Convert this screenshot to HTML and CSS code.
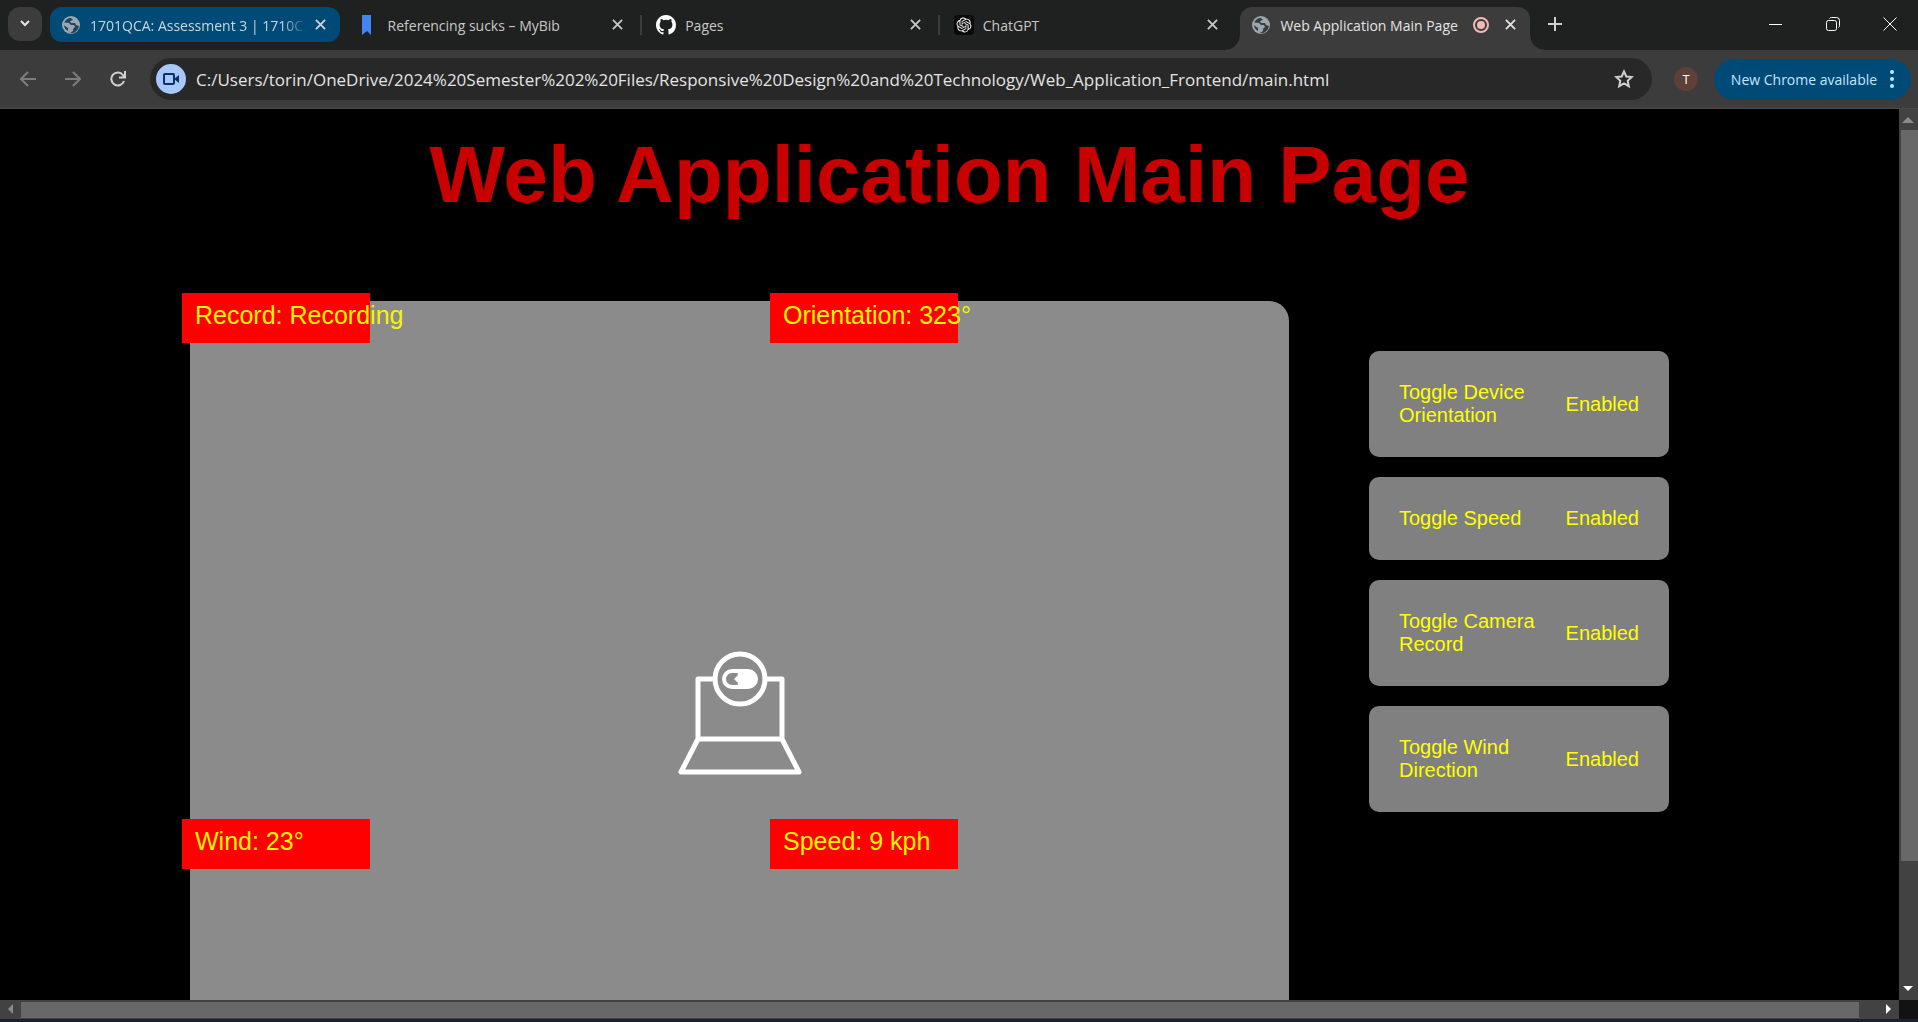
FILE: index.html
```html
<!DOCTYPE html>
<html lang="en">
<head>
<meta charset="utf-8">
<title>Web Application Main Page</title>
<link rel="stylesheet" href="styles.css">
</head>
<body>
<svg class="defs" aria-hidden="true">
  <symbol id="close" viewBox="0 0 12 12"><path d="M1 1l10 10M11 1L1 11" fill="none" stroke="currentColor" stroke-width="2"/></symbol>
  <symbol id="globe" viewBox="0 0 20 20"><circle cx="10" cy="10" r="9" fill="#9aa6b2"/><path d="M10 3C7 3 4 5 3.500 7.500L8 8l2 2h3l1 2-2 2v2l-3 2c4 1 8-2 9-7l-3-1-1-2h-4l-1-2 3-1zM3 10c0 3 2 5 4 6v-3l-3-2z" fill="currentColor"/></symbol>
</svg>
<header class="tab-strip">
  <button class="tab-search" aria-label="Search tabs"><svg width="12" height="8" viewBox="0 0 12 8"><path d="M2 1l4 4 4-4" fill="none" stroke="#e8e8e8" stroke-width="2"/></svg></button>
  <nav class="tabs" aria-label="Tabs">
    <div class="tab tab-shared"><svg class="favicon"><use href="#globe"/></svg><a class="tab-title fade" href="#">1701QCA: Assessment 3 | 1710C</a><button class="tab-close" aria-label="Close tab"><svg width="11" height="11"><use href="#close"/></svg></button></div>
    <div class="tab"><svg class="favicon" viewBox="0 0 20 20"><path d="M3 0h9v20l-4-4-5 4z" fill="#4285f4"/></svg><a class="tab-title" href="#">Referencing sucks – MyBib</a><button class="tab-close" aria-label="Close tab"><svg width="11" height="11"><use href="#close"/></svg></button></div>
    <div class="tab divided"><svg class="favicon" viewBox="0 0 16 16"><path fill="#fff" d="M8 0C3.580 0 0 3.580 0 8c0 3.540 2.290 6.530 5.470 7.590.4.070.55-.17.55-.38 0-.19-.01-.82-.01-1.490-2.010.37-2.530-.49-2.690-.94-.09-.23-.48-.94-.82-1.130-.28-.15-.68-.52-.01-.53.63-.01 1.080.58 1.230.82.72 1.210 1.870.87 2.330.66.07-.52.28-.87.51-1.070-1.780-.2-3.640-.89-3.640-3.950 0-.87.31-1.590.82-2.150-.08-.2-.36-1.020.08-2.120 0 0 .67-.21 2.200.82a7.400 7.400 0 0 1 4 0c1.530-1.040 2.200-.82 2.200-.82.44 1.100.16 1.920.08 2.120.51.56.82 1.270.82 2.150 0 3.070-1.870 3.750-3.650 3.950.29.25.54.73.54 1.480 0 1.070-.01 1.930-.01 2.200 0 .21.15.46.55.38A8 8 0 0 0 16 8c0-4.420-3.580-8-8-8z"/></svg><a class="tab-title" href="#">Pages</a><button class="tab-close" aria-label="Close tab"><svg width="11" height="11"><use href="#close"/></svg></button></div>
    <div class="tab divided"><svg class="favicon" viewBox="-4 -4 32 32"><rect x="-4" y="-4" width="32" height="32" rx="6" fill="#090909"/><path fill="#fff" d="M22.2819 9.8211a5.9847 5.9847 0 0 0-.5157-4.9108 6.0462 6.0462 0 0 0-6.5098-2.9A6.0651 6.0651 0 0 0 4.9807 4.1818a5.9847 5.9847 0 0 0-3.9977 2.9 6.0462 6.0462 0 0 0 .7427 7.0966 5.98 5.98 0 0 0 .511 4.9107 6.051 6.051 0 0 0 6.5146 2.9001A5.9847 5.9847 0 0 0 13.2599 24a6.0557 6.0557 0 0 0 5.7718-4.2058 5.9894 5.9894 0 0 0 3.9977-2.9001 6.0557 6.0557 0 0 0-.7475-7.0729zm-9.022 12.6081a4.4755 4.4755 0 0 1-2.8764-1.0408l.1419-.0804 4.7783-2.7582a.7948.7948 0 0 0 .3927-.6813v-6.7369l2.02 1.1686a.071.071 0 0 1 .038.052v5.5826a4.504 4.504 0 0 1-4.4945 4.4944zm-9.6607-4.1254a4.4708 4.4708 0 0 1-.5346-3.0137l.142.0852 4.783 2.7582a.7712.7712 0 0 0 .7806 0l5.8428-3.3685v2.3324a.0804.0804 0 0 1-.0332.0615L9.74 19.9502a4.4992 4.4992 0 0 1-6.1408-1.6464zM2.3408 7.8956a4.485 4.485 0 0 1 2.3655-1.9728V11.6a.7664.7664 0 0 0 .3879.6765l5.8144 3.3543-2.0201 1.1685a.0757.0757 0 0 1-.071 0l-4.8303-2.7865A4.504 4.504 0 0 1 2.3408 7.872zm16.5963 3.8558L13.1038 8.364 15.1192 7.2a.0757.0757 0 0 1 .071 0l4.8303 2.7913a4.4944 4.4944 0 0 1-.6765 8.1042v-5.6772a.79.79 0 0 0-.407-.667zm2.0107-3.0231l-.142-.0852-4.7735-2.7818a.7759.7759 0 0 0-.7854 0L9.409 9.2297V6.8974a.0662.0662 0 0 1 .0284-.0615l4.8303-2.7866a4.4992 4.4992 0 0 1 6.6802 4.66zM8.3065 12.863l-2.02-1.1638a.0804.0804 0 0 1-.038-.0567V6.0742a4.4992 4.4992 0 0 1 7.3757-3.4537l-.142.0805L8.704 5.459a.7948.7948 0 0 0-.3927.6813zm1.0976-2.3654l2.602-1.4998 2.6069 1.4998v2.9994l-2.5974 1.4997-2.6067-1.4997Z"/></svg><a class="tab-title" href="#">ChatGPT</a><button class="tab-close" aria-label="Close tab"><svg width="11" height="11"><use href="#close"/></svg></button></div>
    <div class="tab tab-active"><svg class="favicon"><use href="#globe"/></svg><a class="tab-title" href="#">Web Application Main Page</a><svg class="recording" width="16" height="16" viewBox="0 0 16 16"><circle cx="8" cy="8" r="7" fill="none" stroke="#f2b8b5" stroke-width="2"/><circle cx="8" cy="8" r="4" fill="#f2b8b5"/></svg><button class="tab-close" aria-label="Close tab"><svg width="11" height="11"><use href="#close"/></svg></button></div>
  </nav>
  <button class="new-tab" aria-label="New tab"><svg width="14" height="14"><path d="M7 0v14M0 7h14" stroke="#d0d0d0" stroke-width="2"/></svg></button>
  <div class="window-controls">
    <button aria-label="Minimize"><svg width="14" height="14"><path d="M0 7.500h13" stroke="#fff"/></svg></button>
    <button aria-label="Restore"><svg width="14" height="14" fill="none" stroke="#fff"><rect x=".5" y="3.500" width="10" height="10" rx="2"/><path d="M3.500 1.500q.5-1 2-1h5a3 3 0 0 1 3 3v5q0 1.500-1 2"/></svg></button>
    <button aria-label="Close window"><svg width="14" height="14"><path d="M.5.5l13 13M13.500.5l-13 13" stroke="#fff"/></svg></button>
  </div>
</header>
<div class="toolbar">
  <button class="nav-button dim" aria-label="Back"><svg width="16" height="16"><path d="M16 8H2M8 1L1 8l7 7" fill="none" stroke="currentColor" stroke-width="2"/></svg></button>
  <button class="nav-button dim" aria-label="Forward"><svg width="16" height="16"><path d="M0 8h14M8 1l7 7-7 7" fill="none" stroke="currentColor" stroke-width="2"/></svg></button>
  <button class="nav-button" aria-label="Reload"><svg width="16" height="16"><path d="M14 10a6.500 6.500 0 1 1-1-6l1 2M15 0v6.500H9" fill="none" stroke="currentColor" stroke-width="2"/></svg></button>
  <div class="omnibox">
    <button class="camera" aria-label="Camera in use"><svg width="16" height="16" viewBox="0 0 16 16"><rect x="1" y="3" width="10" height="10" rx="1" fill="none" stroke="#0a3069" stroke-width="2"/><path d="M11 8l5-4v8z" fill="#0a3069"/></svg></button>
    <input class="url" type="text" aria-label="Address" value="C:/Users/torin/OneDrive/2024%20Semester%202%20Files/Responsive%20Design%20and%20Technology/Web_Application_Frontend/main.html">
    <button class="star" aria-label="Bookmark this page"><svg width="20" height="20" viewBox="0 0 20 20"><path d="M10 2.500l2.300 5 5.400.6-4 3.700 1.100 5.400-4.800-2.700-4.800 2.700 1.100-5.400-4-3.700 5.400-.6z" fill="none" stroke="#d0d0d0" stroke-width="2"/></svg></button>
  </div>
  <button class="avatar" aria-label="Profile">T</button>
  <button class="update">New Chrome available<svg width="4" height="20" fill="#c2e7ff"><circle cx="2" cy="3" r="2"/><circle cx="2" cy="10" r="2"/><circle cx="2" cy="17" r="2"/></svg></button>
</div>
<div class="viewport">
  <div class="page">
    <h1>Web Application Main Page</h1>
    <main>
      <section class="camera-view" aria-label="Camera">
        <svg class="laptop" width="124" height="126" viewBox="0 0 124 126" fill="none" stroke="#fff" stroke-width="5" stroke-linejoin="round">
          <path d="M36 22H20v60h84V22H88M20 82L3 115h118l-17-33"/>
          <circle cx="62" cy="22" r="25"/>
          <rect x="46" y="14" width="32" height="16" rx="8" stroke-width="4"/><path d="M59 14h11a8 8 0 0 1 0 16H59l1-4-4-4 4-4z" fill="#fff" stroke="none"/>
        </svg>
        <output class="reading top left">Record: Recording</output>
        <output class="reading top middle">Orientation: 323°</output>
        <output class="reading low left">Wind: 23°</output>
        <output class="reading low middle">Speed: 9 kph</output>
      </section>
      <aside>
        <button class="toggle"><span>Toggle Device Orientation</span><span>Enabled</span></button>
        <button class="toggle"><span>Toggle Speed</span><span>Enabled</span></button>
        <button class="toggle"><span>Toggle Camera Record</span><span>Enabled</span></button>
        <button class="toggle"><span>Toggle Wind Direction</span><span>Enabled</span></button>
      </aside>
    </main>
  </div>
  <div class="bar vertical"><svg width="13" height="21"><path d="M0 14l6-6 6 6z" fill="#8b8b8b"/></svg><div class="thumb"></div><svg width="13" height="21"><path d="M1 7h10l-5 5z" fill="#fff"/></svg></div>
  <div class="bar horizontal"><svg width="21" height="13"><path d="M13 1v10L8 6z" fill="#8b8b8b"/></svg><div class="thumb"></div><svg width="21" height="13"><path d="M8 1v10l5-5z" fill="#fff"/></svg></div>
  <div class="corner"></div>
</div>
</body>
</html>
```
FILE: styles.css
```css
* { box-sizing: border-box; }
body {
  margin: 0;
  height: 100vh;
  display: flex;
  flex-direction: column;
  overflow: hidden;
  background: #1b222b;
  font-family: "Open Sans", "Noto Sans", sans-serif;
  color: #e3e3e3;
}
button {
  display: flex;
  align-items: center;
  justify-content: center;
  margin: 0;
  padding: 0;
  border: 0;
  background: none;
  color: inherit;
  font: inherit;
}
svg { flex: none; }
.defs { position: absolute; width: 0; height: 0; }

/* Tab strip */
.tab-strip {
  flex: none;
  height: 50px;
  padding: 7px 0 0 8px;
  display: flex;
  align-items: flex-start;
  background: #1f2120;
}
.tab-search { width: 34px; height: 34px; margin-right: 8px; border-radius: 12px; background: #3c3c3c; }
.tabs { display: flex; flex: 0 1 1480px; gap: 8px; min-width: 0; }
.tab {
  position: relative;
  flex: 1 1 0;
  min-width: 0;
  height: 35px;
  padding: 0 14px 0 11px;
  display: flex;
  align-items: center;
  border-radius: 12px;
  font-size: 14px;
  color: #c8c8c8;
}
.tab-shared { background: #004a77; color: #c9d6df; }
.tab.divided::before { content: ""; position: absolute; left: -5px; top: 8px; width: 2px; height: 20px; background: #3c3c3c; }
.tab-active { height: 43px; padding-bottom: 8px; border-radius: 12px 12px 0 0; background: #3c3c3c; color: #e3e3e3; }
.tab-active::before, .tab-active::after { content: ""; position: absolute; bottom: 0; width: 14px; height: 14px; }
.tab-active::before { left: -14px; background: radial-gradient(circle at 0 0, transparent 13px, #3c3c3c 14px); }
.tab-active::after { right: -14px; background: radial-gradient(circle at 100% 0, transparent 13px, #3c3c3c 14px); }
.favicon { width: 20px; height: 20px; margin-right: 9px; color: #1f4560; }
.tab-active .favicon { color: #3c3c3c; }
.tab-title { flex: 1; min-width: 0; padding-top: 1px; overflow: hidden; white-space: nowrap; color: inherit; text-decoration: none; }
.fade { -webkit-mask-image: linear-gradient(90deg, #000 88%, transparent); mask-image: linear-gradient(90deg, #000 88%, transparent); }
.tab-close { width: 11px; height: 20px; margin-left: 16px; }
.tab-shared .tab-close { margin-left: 8px; }
.tab-active .recording { margin-left: 8px; }
.new-tab { width: 34px; height: 34px; margin-left: 8px; }
.window-controls { display: flex; margin-left: auto; }
.window-controls button { width: 57px; height: 34px; }

/* Toolbar */
.toolbar {
  flex: none;
  height: 59px;
  padding: 0 7px 0 5px;
  display: flex;
  align-items: center;
  background: #3c3c3c;
  border-bottom: 1px solid #4a4a4a;
}
.nav-button { width: 45px; height: 40px; color: #d0d0d0; }
.dim { color: #7d7d7d; }
.omnibox {
  flex: 1;
  min-width: 0;
  height: 42px;
  margin-left: 10px;
  padding: 0 18px 0 6px;
  display: flex;
  align-items: center;
  border-radius: 21px;
  background: #282828;
}
.camera { width: 30px; height: 30px; border-radius: 50%; background: #a8c7fa; }
.url { flex: 1; min-width: 0; height: 30px; margin: 0 10px; padding: 0; border: 0; outline: 0; background: none; color: #e3e3e3; font: inherit; font-size: 17px; }
.avatar { width: 24px; height: 24px; margin: 0 16px 0 22px; border-radius: 50%; background: #5d4037; color: #fff; font-size: 13px; }
.update { width: 197px; height: 41px; gap: 13px; border-radius: 21px; background: #004a77; color: #c2e7ff; font-size: 14px; white-space: nowrap; }

/* Scrolling viewport */
.viewport {
  flex: 1;
  min-height: 0;
  margin-bottom: 3px;
  display: grid;
  grid-template: minmax(0, 1fr) 19px / minmax(0, 1fr) 19px;
}
.page { overflow: hidden; display: flex; flex-direction: column; background: #000; font-family: "Liberation Sans", Arial, sans-serif; }
h1 { margin: 0; padding-top: 20px; text-align: center; font-size: 80px; line-height: 92px; color: #c80000; }
main { flex: 1; margin-top: 80px; padding: 0 230px 0 190px; display: flex; gap: 80px; }
.camera-view { position: relative; flex: 1; min-width: 0; border-top-right-radius: 20px; background: #8b8b8c; }
.laptop { position: absolute; left: 488px; top: 356px; overflow: visible; }
.reading {
  position: absolute;
  width: 188px;
  height: 50px;
  padding: 8px 0 0 13px;
  background: #f00;
  color: #f5f500;
  font-size: 25px;
  line-height: 29px;
  white-space: nowrap;
}
.top { top: -8px; }
.low { top: 518px; }
.left { left: -8px; }
.middle { left: 580px; }
aside { width: 300px; padding-top: 50px; display: flex; flex-direction: column; gap: 20px; }
.toggle { gap: 20px; padding: 30px; justify-content: space-between; border-radius: 10px; background: #808080; color: #ff0; font-size: 20px; line-height: 23px; text-align: left; }

/* Scrollbars */
.bar { display: flex; align-items: center; background: #424242; }
.thumb { background: #686868; }
.vertical { flex-direction: column; }
.vertical .thumb { align-self: flex-end; width: 17px; height: 82%; margin-bottom: auto; }
.horizontal .thumb { flex: 1; height: 16px; margin-right: 19px; }
.corner { background: #121212; }
```
